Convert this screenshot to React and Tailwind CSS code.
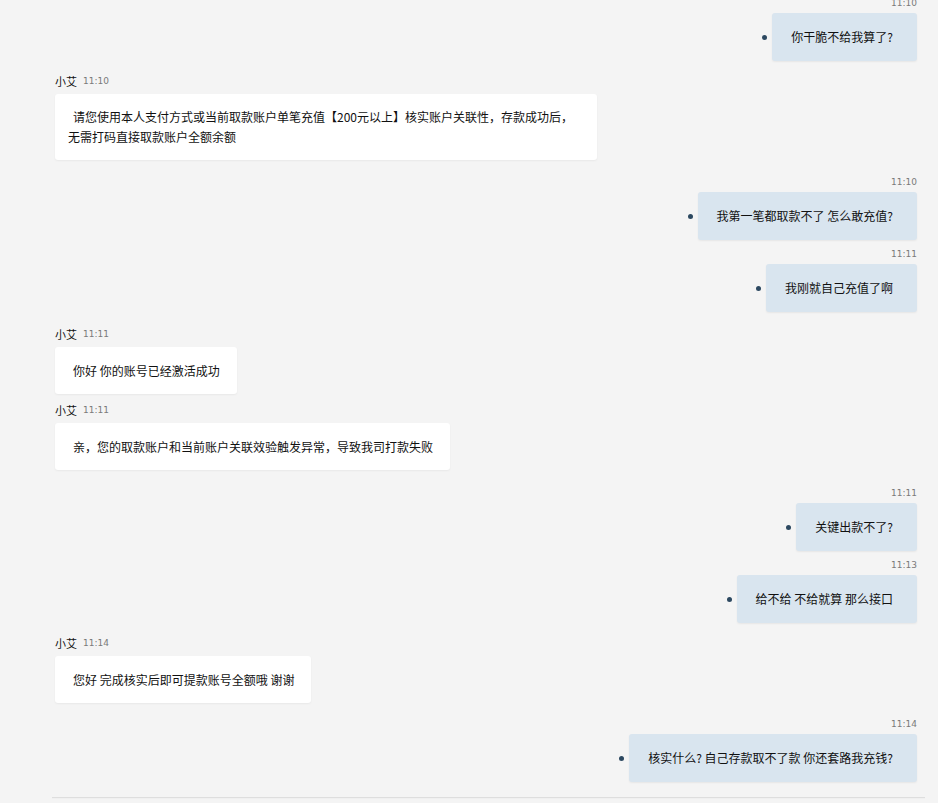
import React from "react";

const font = { fontFamily: '"Noto Sans CJK SC", "Liberation Sans", sans-serif' };

const messages = [
  { side: "right", time: "11:10", text: "你干脆不给我算了?", mt: "mt-[-3px]" },
  {
    side: "left",
    time: "11:10",
    text: (
      <>
        请您使用本人支付方式或当前取款账户单笔充值【200元以上】核实账户关联性，存款成功后，
        <br />
        无需打码直接取款账户全额余额
      </>
    ),
    mt: "mt-[13px]",
    wide: true,
  },
  { side: "right", time: "11:10", text: "我第一笔都取款不了 怎么敢充值?", mt: "mt-[16px]" },
  { side: "right", time: "11:11", text: "我刚就自己充值了啊", mt: "mt-[8px]" },
  { side: "left", time: "11:11", text: "你好 你的账号已经激活成功", mt: "mt-[15px]" },
  { side: "left", time: "11:11", text: "亲，您的取款账户和当前账户关联效验触发异常，导致我司打款失败", mt: "mt-[9px]" },
  { side: "right", time: "11:11", text: "关键出款不了?", mt: "mt-[17px]" },
  { side: "right", time: "11:13", text: "给不给 不给就算 那么接口", mt: "mt-[8px]" },
  { side: "left", time: "11:14", text: "您好 完成核实后即可提款账号全额哦 谢谢", mt: "mt-[13px]" },
  { side: "right", time: "11:14", text: "核实什么? 自己存款取不了款 你还套路我充钱?", mt: "mt-[15px]" },
];

const Time = ({ children }) => (
  <span
    className="text-[9px] leading-[12px] text-[#7a7a7a]"
    style={{ fontFamily: '"DejaVu Sans", sans-serif' }}
  >
    {children}
  </span>
);

const RightMsg = ({ m }) => (
  <div className={`flex flex-col items-end ${m.mt}`}>
    <Time>{m.time}</Time>
    <div className="mt-[4px] flex items-center gap-[5px]">
      <span className="w-[5px] h-[5px] rounded-full bg-[#2c4860]" />
      <div className="bg-[#d9e5ef] rounded-[3px] pl-[19px] pr-[24px] py-[14px] text-[12px] leading-[20px] text-[#111] shadow-[0_1px_2px_rgba(0,0,0,0.06)]">
        {m.text}
      </div>
    </div>
  </div>
);

const LeftMsg = ({ m }) => (
  <div className={`flex flex-col items-start ${m.mt}`}>
    <div className="flex items-center gap-[6px] leading-[14px]">
      <span className="text-[11px] text-[#111]">小艾</span>
      <Time>{m.time}</Time>
    </div>
    <div
      className={
        m.wide
          ? "mt-[6px] w-[542px] bg-white rounded-[3px] pl-[13px] pr-[12px] py-[13px] text-[12px] leading-[20px] text-[#111] shadow-[0_1px_2px_rgba(0,0,0,0.05)]"
          : "mt-[6px] bg-white rounded-[3px] pl-[18px] pr-[17px] py-[13px] text-[12px] leading-[21px] text-[#111] shadow-[0_1px_2px_rgba(0,0,0,0.05)]"
      }
    >
      {m.wide ? <div className="indent-[5px] whitespace-nowrap">{m.text}</div> : m.text}
    </div>
  </div>
);

export default function App() {
  return (
    <div className="h-[803px] overflow-hidden bg-[#f4f4f4]" style={font}>
      <div className="flex flex-col pl-[55px] pr-[21px]">
        {messages.map((m, i) =>
          m.side === "right" ? <RightMsg key={i} m={m} /> : <LeftMsg key={i} m={m} />
        )}
        <div className="mt-[15px] -ml-[3px] mr-[-8px] h-[2px] border-t border-[#dedede] bg-[#f0f0f0]" />
      </div>
    </div>
  );
}
